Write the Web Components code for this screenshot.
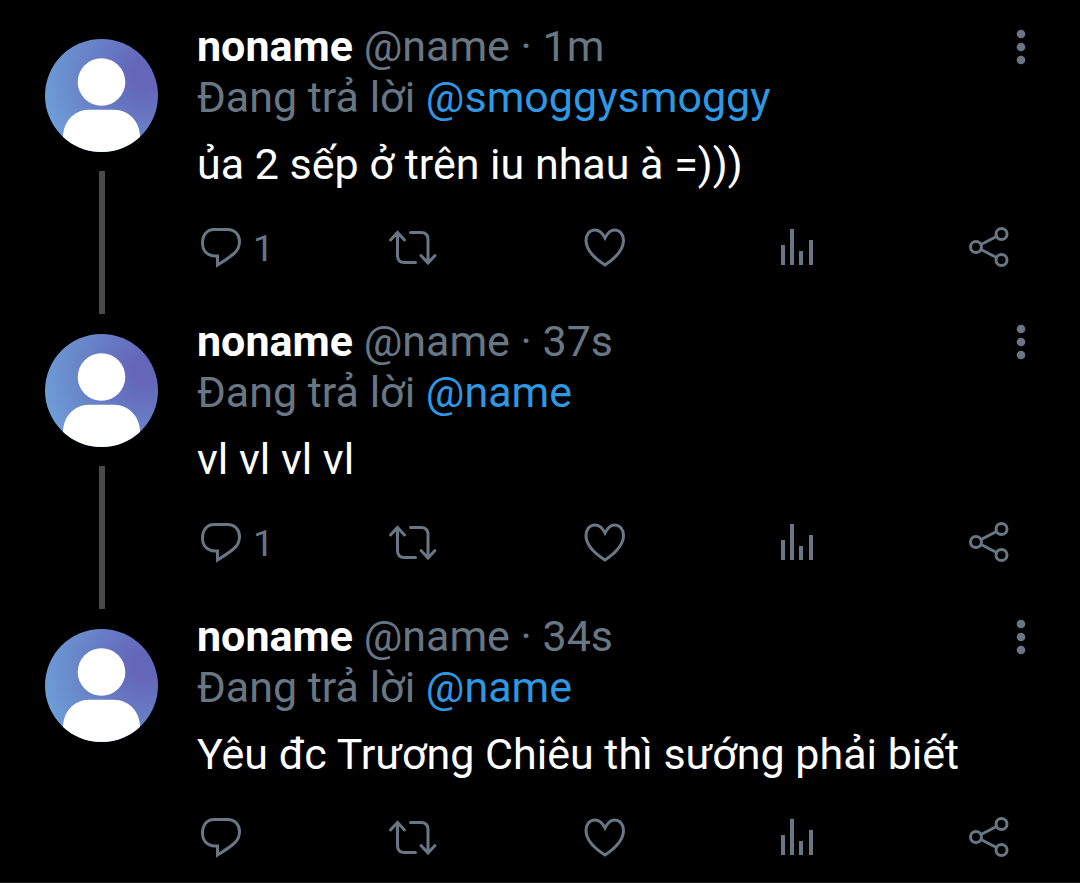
<!DOCTYPE html>
<html lang="vi">
<head>
<meta charset="utf-8">
<meta name="viewport" content="width=device-width, initial-scale=1">
<title>Thread</title>
<style>
    body {
        margin: 0;
        background: #000;
        color: #fff;
        font-family: Roboto, "Noto Sans", sans-serif;
        font-size: 43px;
        line-height: 51px;
        --muted: #697683;
        --link: #2f98e2;
        --line: #4a4a4a;
    }
</style>
</head>
<body>
<tweet-thread>
    <tweet-post name="noname" handle="@name" time="1m" reply-to="@smoggysmoggy" replies="1" connected>ủa 2 sếp ở trên iu nhau à =)))</tweet-post>
    <tweet-post name="noname" handle="@name" time="37s" reply-to="@name" replies="1" connected>vl vl vl vl</tweet-post>
    <tweet-post name="noname" handle="@name" time="34s" reply-to="@name">Yêu đc Trương Chiêu thì sướng phải biết</tweet-post>
</tweet-thread>

<script>
// --- Icons, drawn on a 48x48 grid ---
const ICONS = {
    reply: '<path d="M17 6.5H30.5C38 6.500 42.5 12 42.5 18.5C42.5 24 40.5 27.5 37 30.5C33 34 27 38 20.5 42V33H18C10 32.5 5.500 27.5 5.500 20C5.500 12 10 6.500 17 6.500Z"/>',
    retweet: '<path d="M1.5 17 8.5 9.5l7 7.5M8.5 10V32.5q0 7 7 7H26.5M32 32.5l7 7.5 7-7.5M39 39.5V16.5q0-7-7-7H21.5"/>',
    like: '<path d="M24 15C21.5 10 18 7 14 7C8.5 7 5 11.5 5 17.5C5 26 13 35 24 42C34.5 35 42.5 26 42.5 17.5C42.5 11.5 39 7 33.5 7C29.5 7 26.5 10 24 15Z"/>',
    stats: '<path stroke="none" fill="currentColor" d="M8 22h4v20H8zM17 6h4v36h-4zM26 28h4v14h-4zM36 17h4v25h-4z"/>',
    share: '<circle cx="11" cy="24" r="5.5"/><circle cx="36.5" cy="11" r="5.5"/><circle cx="36.5" cy="37" r="5.5"/><path d="M16 21.5 31.5 13.5M16 26.5l15.5 8"/>',
};

// --- Thread list ---
class TweetThread extends HTMLElement {
    constructor() {
        super();
        this.attachShadow({ mode: 'open' }).innerHTML = `
            <style>
                :host { display: block; padding-top: 21px; border-bottom: 1px solid #1b1b1b; }
            </style>
            <main><slot></slot></main>
        `;
    }
}
customElements.define('tweet-thread', TweetThread);

// --- Default profile picture ---
class UserAvatar extends HTMLElement {
    constructor() {
        super();
        this.attachShadow({ mode: 'open' }).innerHTML = `
            <style>
                :host { display: block; width: 113px; height: 113px; border-radius: 50%; overflow: hidden;
                    background: linear-gradient(60deg, #70abe0 10%, #6a8bcc 45%, #6466b9 82%);
                    background: radial-gradient(circle at 88% 32%, #6466b9 10%, #6a8bcc 60%, #70abe0 100%); }
                svg { display: block; }
            </style>
            <svg viewBox="0 0 113 113" fill="#fff" aria-hidden="true">
                <circle cx="56.5" cy="43" r="23.8"/>
                <path d="M18 113V98C18 83 29 70.700 44 70.700H69C84 70.700 95 83 95 98V113Z"/>
            </svg>
        `;
    }
}
customElements.define('user-avatar', UserAvatar);

// --- Action button: icon with an optional count in the slot ---
class TweetAction extends HTMLElement {
    connectedCallback() {
        if (this.shadowRoot) return;
        const icon = this.getAttribute('icon');
        this.attachShadow({ mode: 'open' }).innerHTML = `
            <style>
                :host { display: block; }
                button { display: flex; align-items: center; gap: 8px; height: 48px; padding: 0; border: 0;
                    background: none; color: var(--muted); font: inherit; font-size: 37px; line-height: 44px; cursor: pointer; }
                svg { flex: none; width: 48px; height: 48px; overflow: visible; fill: none; stroke: currentColor;
                    stroke-width: 3; stroke-linecap: round; stroke-linejoin: miter; }
                .count { padding-top: 4px; }
            </style>
            <button type="button" aria-label="${this.getAttribute('label')}">
                <svg viewBox="0 0 48 48" aria-hidden="true">${ICONS[icon]}</svg>
                <span class="count"><slot></slot></span>
            </button>
        `;
    }
}
customElements.define('tweet-action', TweetAction);

// --- Single post ---
class TweetPost extends HTMLElement {
    connectedCallback() {
        if (this.shadowRoot) return;
        const attr = (key) => this.getAttribute(key) || '';
        this.attachShadow({ mode: 'open' }).innerHTML = `
            <style>
                :host { display: block; }
                article { display: flex; gap: 39px; padding: 0 47px 0 45px; }
                .rail { flex: none; display: flex; flex-direction: column; align-items: center; gap: 19px; padding: 18px 0 2px; }
                .connector { flex: 1; width: 6px; background: var(--line); }
                .content { flex: 1; min-width: 0; padding-bottom: 21px; }
                :host([connected]) .content { padding-bottom: 45px; }
                header { display: flex; justify-content: space-between; }
                .meta, .replying { color: var(--muted); }
                .meta strong { color: #fff; font-weight: 700; }
                .replying a { color: var(--link); text-decoration: none; }
                p { margin: 0; }
                .text { margin-top: 16px; overflow-wrap: break-word; }
                .menu { flex: none; width: 24px; height: 51px; padding: 0; border: 0; background: none; color: var(--muted); cursor: pointer; }
                .menu svg { display: block; width: 24px; height: 51px; fill: currentColor; }
                .actions { display: flex; margin: 33px 20px 0 0; }
                tweet-action { flex: 1 1 0; }
                tweet-action:last-child { flex: none; width: 48px; }
            </style>
            <article>
                <div class="rail">
                    <user-avatar></user-avatar>
                    ${this.hasAttribute('connected') ? '<div class="connector"></div>' : ''}
                </div>
                <div class="content">
                    <header>
                        <div class="meta"><strong>${attr('name')}</strong> <span>${attr('handle')}</span> · <time>${attr('time')}</time></div>
                        <button class="menu" type="button" aria-label="Thêm">
                            <svg viewBox="0 0 24 51" aria-hidden="true"><circle cx="12" cy="13" r="4.3"/><circle cx="12" cy="26" r="4.3"/><circle cx="12" cy="39" r="4.3"/></svg>
                        </button>
                    </header>
                    <p class="replying">Đang trả lời <a href="#">${attr('reply-to')}</a></p>
                    <p class="text"><slot></slot></p>
                    <div class="actions">
                        <tweet-action icon="reply" label="Trả lời">${attr('replies')}</tweet-action>
                        <tweet-action icon="retweet" label="Tweet lại"></tweet-action>
                        <tweet-action icon="like" label="Thích"></tweet-action>
                        <tweet-action icon="stats" label="Số liệu"></tweet-action>
                        <tweet-action icon="share" label="Chia sẻ"></tweet-action>
                    </div>
                </div>
            </article>
        `;
    }
}
customElements.define('tweet-post', TweetPost);
</script>
</body>
</html>
